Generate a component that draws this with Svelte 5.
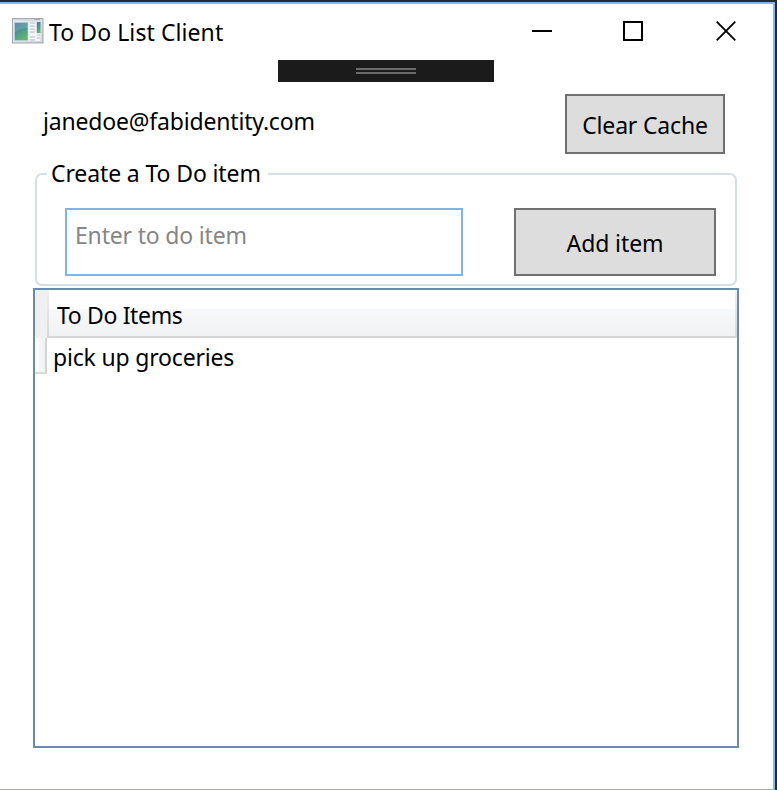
<script>
  const items = ['pick up groceries'];
</script>

<div class="window">
  <header>
    <svg class="app-icon" width="32" height="26" viewBox="0 0 32 26">
      <defs>
        <linearGradient id="frame" x1="0" y1="0" x2="1" y2="1">
          <stop offset="0" stop-color="#f0f0f4" />
          <stop offset="1" stop-color="#d0d2da" />
        </linearGradient>
        <linearGradient id="pane" x1="0" y1="0" x2="0.5" y2="1">
          <stop offset="0" stop-color="#3f78ad" />
          <stop offset="0.5" stop-color="#4c9292" />
          <stop offset="1" stop-color="#62b56f" />
        </linearGradient>
      </defs>
      <rect x="0.5" y="0.5" width="30.5" height="24.5" fill="url(#frame)" stroke="#a3a5ab" />
      <path d="M1 1h29v2H1z" fill="#d6dce7" />
      <path d="M22 1h6v1h-6z" fill="#a8adb8" />
      <rect x="2" y="4" width="26.5" height="19" fill="#f3f4f7" />
      <rect x="2.5" y="4.5" width="13.5" height="18" fill="url(#pane)" stroke="#b6d3dc" stroke-width=".7" />
      <path d="M3 5h13v5Q9 10 3 14z" fill="#fff" opacity=".14" />
      <path d="M18 5h5M18 8h5M18 11h5M18 14h5M18 19h5M18 22h5M25 17h3M25 20h3" stroke="#cdced2" stroke-width="1.5" />
      <rect x="24.8" y="4" width="3.8" height="11" fill="url(#pane)" />
    </svg>
    <span class="title">To Do List Client</span>
    <div class="controls">
      <svg width="20" height="20" viewBox="0 0 20 20"><path d="M0 10h20" /></svg>
      <svg width="20" height="20" viewBox="0 0 20 20"><path d="M1 1h18v18H1z" /></svg>
      <svg width="20" height="20" viewBox="0 0 20 20"><path d="M.7.7l18.6 18.6M19.3.7L.7 19.3" /></svg>
    </div>
  </header>
  <div class="debug-bar"><i></i><i></i></div>
  <main>
    <div class="account">
      <span class="email">janedoe@fabidentity.com</span>
      <button class="clear"><span>Clear Cache</span></button>
    </div>
    <fieldset>
      <legend><span>Create a To Do item</span></legend>
      <div class="form">
        <input placeholder="Enter to do item" />
        <button class="add"><span>Add item</span></button>
      </div>
    </fieldset>
    <div class="grid">
      <div class="head">
        <div class="corner"></div>
        <div class="column"><span>To Do Items</span></div>
      </div>
      {#each items as item}
        <div class="row">
          <div class="handle"></div>
          <span class="item">{item}</span>
        </div>
      {/each}
    </div>
  </main>
</div>

<style>
  :global(body) { margin: 0; background: #292929; overflow: hidden; }
  * { box-sizing: border-box; }
  .window {
    width: 775px; height: 788px; margin-top: 2px;
    border: solid #7cb9f5; border-width: 2px 2px 1px 0;
    background: #fff; color: #000;
    font: 23px/32px "Noto Sans", "Open Sans", sans-serif;
    letter-spacing: -0.18px; white-space: nowrap;
    display: flex; flex-direction: column;
  }
  header { height: 56px; display: flex; padding: 14px 37px 0 12px; }
  .app-icon { flex: none; }
  .title { margin: -2px 0 0 5px; letter-spacing: 0.08px; }
  .controls { margin: 3px 0 0 auto; display: flex; gap: 71px; }
  .controls svg { fill: none; stroke: #000; stroke-width: 2; }
  .controls svg:last-child { margin-left: 2px; stroke-width: 1.8; }
  .debug-bar {
    width: 216px; height: 22px; margin-left: 278px; background: #1b1b1b;
    display: flex; flex-direction: column; align-items: center; gap: 2px; padding-top: 8px;
  }
  .debug-bar i { width: 60px; height: 2px; background: #6a6c6a; }
  main { padding: 12px 0 0 33px; width: 739px; }
  .account { display: flex; justify-content: space-between; height: 60px; padding: 0 14px 0 10px; }
  .email { margin-top: 11px; }
  button, input { font: inherit; letter-spacing: inherit; color: #000; border-radius: 0; margin: 0; outline: 0; }
  button { background: #ddd; border: 2px solid #707070; padding: 1px 0 0; line-height: 32px; }
  .clear { width: 160px; height: 60px; }
  fieldset {
    height: 128px; width: 702px; margin: 4px 0 2px 2px; padding: 0;
    border: 2px solid #d5dfe5; border-radius: 7px; min-width: 0;
  }
  legend { height: 32px; width: 221px; margin-left: 10px; padding: 0 0 0 4px; letter-spacing: -0.12px; }
  legend span { display: block; margin-top: -1px; }
  .form { display: flex; justify-content: space-between; padding: 18px 19px 0 28px; }
  input { width: 398px; height: 68px; border: 2px solid #7eb4ea; padding: 0 8px 14px; background: #fff; }
  input::placeholder { color: #868686; opacity: 1; }
  .add { width: 202px; height: 68px; letter-spacing: -0.1px; }
  .grid { width: 706px; height: 460px; border: 2px solid #688caf; }
  .head { display: flex; height: 48px; }
  .corner { width: 14px; background: #f0f0f0; }
  .column {
    flex: 1; margin-left: -2px; padding: 9px 0 0 8px; letter-spacing: -0.35px;
    border: solid #d8d9da; border-width: 0 2px 2px;
    border-image: linear-gradient(#f2f2f2, #d5d5d5) 2;
    background: linear-gradient(#fff 0 19px, #f7f8fa 19px, #f1f2f4 46px);
  }
  .row { display: flex; height: 36px; }
  .handle {
    width: 12px; border-right: 2px solid #d5d5d5; border-bottom: 2px solid #d9d9d9;
    background: linear-gradient(90deg, #fff 0 4px, #f5f6f8 4px, #f1f2f4);
  }
  .item { margin: 3px 0 0 6px; }
</style>
